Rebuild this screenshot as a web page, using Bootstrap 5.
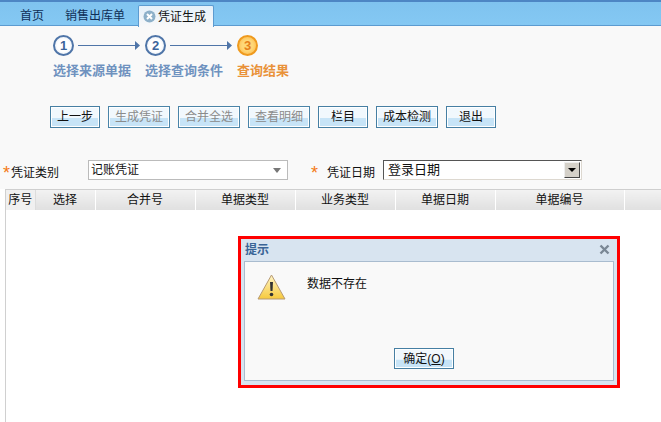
<!DOCTYPE html>
<html lang="zh-CN">

<head>
    <meta charset="UTF-8">
    <meta name="viewport" content="width=device-width, initial-scale=1.0">
    <title>凭证生成</title>
    <link rel="stylesheet" href="https://cdn.jsdelivr.net/npm/bootstrap@5.3.0/dist/css/bootstrap.min.css">
    <style>
        html, body { height: 100%; }
        body { font: 12px/16px "Liberation Sans", "Noto Sans CJK SC", sans-serif; color: #111; background: #fff; overflow: hidden; position: relative; }

        .tab-bar { height: 26px; padding-left: 9px; background: linear-gradient(#7fc3ef, #84c8f3); border-top: 2px solid #4d86c4; border-bottom: 1px solid #5c9bd0; }
        .tab-item { height: 21px; margin-top: 3px; padding: 3px 10px 0 11px; color: #0f2f57; }
        .tab-item.now { width: 76px; margin-left: 3px; margin-bottom: -1px; height: 22px; padding: 3px 0 0 4px; background: linear-gradient(#e4f0fa, #f9f9f9); border: 1px solid #5c9bd0; border-bottom: 0; border-radius: 2px 2px 0 0; color: #111; }
        .tab-close { width: 13px; height: 13px; margin-top: 1px; margin-right: 2px; flex: none; }

        .top-area { height: 163px; background: #f9f9f9; }
        .step-line { padding: 9px 0 0 53px; height: 37px; }
        .step-dot { width: 21px; height: 21px; border-radius: 50%; border: 2px solid #4f75a8; background: radial-gradient(#fff 50%, #d9e4f1); color: #3d659c; font: bold 13px/17px "Liberation Sans", sans-serif; text-align: center; flex: none; }
        .step-dot.now { border-color: #ef9a1e; background: radial-gradient(#ffd777 45%, #fbb13c); color: #e5801a; }
        .step-arrow { width: 62px; height: 9px; margin: 6px 5px 0 4px; flex: none; }
        .step-names { padding-left: 53px; height: 26px; font-size: 13px; font-weight: bold; color: #6f92bf; }
        .step-names span { width: 92px; }
        .step-names .now { color: #e9923a; }

        .tool-line { padding: 17px 0 0 50px; gap: 8px; height: 65px; }
        .tool-btn { height: 22px; width: 62px; padding: 0; border: 1px solid #467fa3; border-radius: 0; font-size: 12px; line-height: 18px; color: #111; background: linear-gradient(#f1f8fd 0, #f1f8fd 55%, #c7e4f7 56%, #c7e4f7 100%); box-shadow: inset 0 0 0 1px #fff; }
        .tool-btn.short { width: 50px; }
        .tool-btn:disabled { color: #8b8b8b; opacity: 1; border-color: #4a84a8; }

        .form-line { height: 35px; padding-top: 6px; }
        .need { color: #f47a14; font-size: 18px; line-height: 22px; width: 11px; padding: 2px 0 0 3px; flex: none; }
        .form-name { padding-top: 5px; }
        .combo-box { width: 200px; height: 20px; border: 1px solid #bbb; background: #fff; padding: 1px 3px 1px 2px; margin-left: 29px; line-height: 16px; }
        .combo-arrow { width: 0; height: 0; border: 4px solid transparent; border-top: 5px solid #777; border-bottom: 0; margin: 6px 3px 0 0; }
        .old-select { width: 199px; height: 20px; margin-left: 8px; border: 1px solid; border-color: #555 #ddd8d0 #ddd8d0 #555; background: #fff; padding: 1px 0 0 4px; font-size: 13px; line-height: 16px; }
        .old-btn { width: 16px; height: 16px; margin: 0 1px 0 0; background: #d4d0c8; border: 1px solid; border-color: #eee #444 #444 #eee; }
        .old-btn i { width: 0; height: 0; border: 4px solid transparent; border-top: 4px solid #000; border-bottom: 0; margin: 5px 0 0 3px; display: block; }
        .form-line .second { margin-left: 23px; width: 16px; padding-left: 0; }

        .grid-area { margin-left: 5px; height: 233px; border-left: 1px solid #d0d0d0; border-top: 1px solid #cfcfcf; }
        .grid-head { table-layout: fixed; width: 656px; border-collapse: collapse; }
        .grid-head th { height: 20px; padding: 0; font-weight: normal; text-align: center; background: linear-gradient(#f2f2f2, #e0e0e0); border-right: 1px solid #fff; }
        .grid-head th:first-child { background: #f0f0f0; border-right: 1px solid #dcdcdc; }

        .msg-box { position: absolute; left: 238px; top: 236px; width: 382px; height: 152px; border: 3px solid #f00; border-radius: 0; background: #d8e4f0; padding: 0 3px 4px; }
        .msg-head { height: 22px; padding: 3px 1px 0 1px; background: transparent; border: 0; border-radius: 0; color: #3a6496; font-weight: bold; }
        .msg-x { width: 11px; height: 11px; margin: 2px 3px 0 0; }
        .msg-body { border: 1px solid #a9bccf; background: #f9f9f9; padding: 0; }
        .warn-icon { width: 29px; height: 26px; margin: 12px 0 0 12px; flex: none; }
        .msg-text { margin: 14px 0 0 21px; }
        .msg-foot { bottom: 11px; left: 149px; }
        .msg-foot .tool-btn { width: 60px; height: 21px; }
        .msg-foot u { text-underline-offset: 1px; }
    </style>
</head>

<body>
    <div class="tab-bar d-flex">
        <div class="tab-item">首页</div>
        <div class="tab-item">销售出库单</div>
        <div class="tab-item now d-flex">
            <svg class="tab-close" viewBox="0 0 13 13"><circle cx="6.5" cy="6.5" r="6" fill="#8db0c9"/><path d="M4 4l5 5M9 4l-5 5" stroke="#fff" stroke-width="2"/></svg>
            <span>凭证生成</span>
        </div>
    </div>

    <div class="top-area">
        <div class="step-line d-flex">
            <div class="step-dot">1</div>
            <svg class="step-arrow" viewBox="0 0 62 9"><path d="M0 4.5h57" stroke="#4f75a8" stroke-width="1"/><path d="M57 0l5 4.5-5 4.5z" fill="#4f75a8"/></svg>
            <div class="step-dot">2</div>
            <svg class="step-arrow" viewBox="0 0 62 9"><path d="M0 4.5h57" stroke="#4f75a8" stroke-width="1"/><path d="M57 0l5 4.5-5 4.5z" fill="#4f75a8"/></svg>
            <div class="step-dot now">3</div>
        </div>
        <div class="step-names d-flex">
            <span>选择来源单据</span>
            <span>选择查询条件</span>
            <span class="now">查询结果</span>
        </div>
        <div class="tool-line d-flex">
            <button class="btn tool-btn short">上一步</button>
            <button class="btn tool-btn" disabled>生成凭证</button>
            <button class="btn tool-btn" disabled>合并全选</button>
            <button class="btn tool-btn" disabled>查看明细</button>
            <button class="btn tool-btn short">栏目</button>
            <button class="btn tool-btn">成本检测</button>
            <button class="btn tool-btn short">退出</button>
        </div>
        <div class="form-line d-flex">
            <span class="need">*</span>
            <span class="form-name">凭证类别</span>
            <div class="combo-box d-flex justify-content-between">
                <span>记账凭证</span>
                <i class="combo-arrow"></i>
            </div>
            <span class="need second">*</span>
            <span class="form-name">凭证日期</span>
            <div class="old-select d-flex justify-content-between">
                <span>登录日期</span>
                <div class="old-btn"><i></i></div>
            </div>
        </div>
    </div>

    <div class="grid-area">
        <table class="grid-head">
            <colgroup>
                <col style="width:29px"><col style="width:60px"><col style="width:100px"><col style="width:100px"><col style="width:100px"><col style="width:100px"><col style="width:129px"><col>
            </colgroup>
            <tr>
                <th>序号</th>
                <th>选择</th>
                <th>合并号</th>
                <th>单据类型</th>
                <th>业务类型</th>
                <th>单据日期</th>
                <th>单据编号</th>
                <th></th>
            </tr>
        </table>
    </div>

    <div class="card msg-box">
        <div class="card-header msg-head d-flex justify-content-between">
            <span>提示</span>
            <svg class="msg-x" viewBox="0 0 11 11"><path d="M1.5 1.5l8 8M9.5 1.5l-8 8" stroke="#7a8795" stroke-width="2.4"/></svg>
        </div>
        <div class="card-body msg-body position-relative d-flex">
            <svg class="warn-icon" viewBox="0 0 29 26">
                <defs><linearGradient id="warnFill" x1="0" y1="0" x2="0" y2="1"><stop offset="0" stop-color="#fff6c8"/><stop offset="1" stop-color="#f7c93c"/></linearGradient></defs>
                <path d="M14.5 1L28 25H1z" fill="url(#warnFill)" stroke="#b79a74" stroke-linejoin="round"/>
                <path d="M13 8h3l-.5 9h-2z" fill="#333"/>
                <circle cx="14.5" cy="20.5" r="1.8" fill="#333"/>
            </svg>
            <div class="msg-text">数据不存在</div>
            <div class="msg-foot position-absolute">
                <button class="btn tool-btn">确定(<u>O</u>)</button>
            </div>
        </div>
    </div>

    <script src="https://cdn.jsdelivr.net/npm/bootstrap@5.3.0/dist/js/bootstrap.bundle.min.js"></script>
</body>

</html>
